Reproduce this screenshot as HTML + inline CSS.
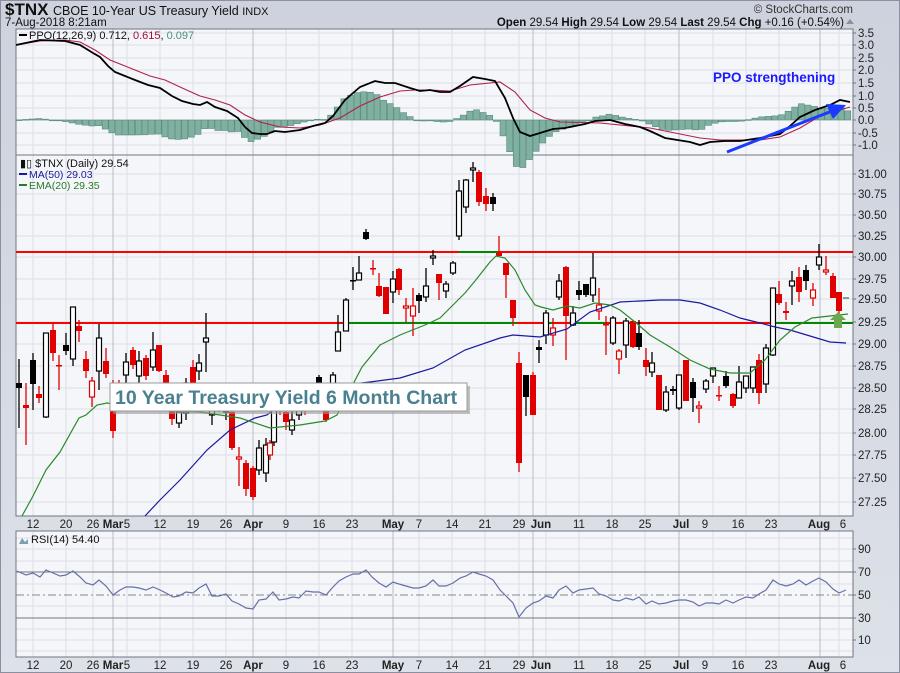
<!DOCTYPE html>
<html><head><meta charset="utf-8"><style>
html,body{margin:0;padding:0;background:#d6dae3;}
svg{display:block;font-family:"Liberation Sans",sans-serif;}
</style></head><body>
<svg id="s" width="900" height="673" viewBox="0 0 900 673" xmlns="http://www.w3.org/2000/svg">
<defs>
<linearGradient id="bg" x1="0" y1="0" x2="0" y2="1"><stop offset="0" stop-color="#cdd2dc"/><stop offset="1" stop-color="#dde1e8"/></linearGradient>
</defs>
<rect x="0" y="0" width="900" height="673" fill="url(#bg)"/>
<rect x="0.5" y="0.5" width="899" height="672" fill="none" stroke="#8a90a0"/>
<text x="5" y="15" font-size="17" font-weight="bold" fill="#111">$TNX</text>
<text x="53" y="15" font-size="12.5" fill="#111">CBOE 10-Year US Treasury Yield <tspan font-size="11">INDX</tspan></text>
<text x="5" y="26" font-size="11.5" fill="#111">7-Aug-2018 8:21am</text>
<text x="853" y="13" font-size="11.5" fill="#333" text-anchor="end">© StockCharts.com</text>
<text x="844" y="26" font-size="11.5" fill="#111" text-anchor="end"><tspan font-weight="bold">Open</tspan> 29.54  <tspan font-weight="bold">High</tspan> 29.54  <tspan font-weight="bold">Low</tspan> 29.54  <tspan font-weight="bold">Last</tspan> 29.54  <tspan font-weight="bold">Chg</tspan> +0.16 (+0.54%)</text>
<path d="M846 24 l4 -5 l4 5z" fill="#8a90a0"/>
<g id="panels"></g>
</svg>
<script>
const S=document.getElementById('panels');let h='';
const L=16,R=853;
const months=[113,253,393,533,679,820];
const weeks=[33,66,93,127,160,193,226,286,319,352,419,452,485,519,546,579,612,645,713,746,779,839];
function panel(y0,y1,hl){
 h+=`<rect x="${L}" y="${y0}" width="${R-L}" height="${y1-y0}" fill="#f5f6fa"/>`;
 hl.forEach(y=>h+=`<line x1="${L}" x2="${R}" y1="${y}" y2="${y}" stroke="#dcdfe6"/>`);
 weeks.forEach(x=>h+=`<line x1="${x}" x2="${x}" y1="${y0}" y2="${y1}" stroke="#dcdfe6"/>`);
 months.forEach(x=>h+=`<line x1="${x}" x2="${x}" y1="${y0}" y2="${y1}" stroke="#b8bcc6"/>`);
}
const ppoL=[[3.5,33],[3.0,45],[2.5,58],[2.0,70],[1.5,83],[1.0,96],[0.5,108],[0.0,120],[-0.5,133],[-1.0,145]];
panel(29,155,ppoL.map(a=>a[1]));
const pr=[[31.00,174],[30.75,194],[30.50,215],[30.25,236],[30.00,257],[29.75,279],[29.50,299],[29.25,322],[29.00,344],[28.75,366],[28.50,388],[28.25,409],[28.00,433],[27.75,455],[27.50,478],[27.25,502]];
panel(155,516,pr.map(a=>a[1]));
const rs=[[90,549],[70,572],[50,595],[30,618],[10,640]];
panel(531,657,[538,549,561,584,606,629,640,651]);
h+=`<line x1="${L}" x2="${R}" y1="572" y2="572" stroke="#777"/><line x1="${L}" x2="${R}" y1="618" y2="618" stroke="#777"/><line x1="${L}" x2="${R}" y1="595" y2="595" stroke="#888" stroke-dasharray="8,3,2,3"/>`;
[[29,155],[155,516],[531,657]].forEach(p=>h+=`<rect x="${L}" y="${p[0]}" width="${R-L}" height="${p[1]-p[0]}" fill="none" stroke="#707684"/>`);
function rl(arr,f){arr.forEach(a=>{h+=`<line x1="${R}" x2="${R+3}" y1="${a[1]}" y2="${a[1]}" stroke="#707684"/><text x="${R+5}" y="${a[1]+4}" font-size="11.5" fill="#222">${f(a[0])}</text>`;});}
rl(ppoL,v=>v.toFixed(1));rl(pr,v=>v.toFixed(2));rl(rs,v=>v);
const dl=[[33,'12'],[66,'20'],[93,'26'],[113,'Mar',1],[127,'5'],[160,'12'],[193,'19'],[226,'26'],[253,'Apr',1],[286,'9'],[319,'16'],[352,'23'],[393,'May',1],[419,'7'],[452,'14'],[485,'21'],[519,'29'],[541,'Jun',1],[579,'11'],[612,'18'],[645,'25'],[681,'Jul',1],[705,'9'],[738,'16'],[771,'23'],[819,'Aug',1],[843,'6']];
[528,669].forEach(y=>dl.forEach(d=>h+=`<text x="${d[0]}" y="${y}" font-size="11.5" text-anchor="middle" ${d[2]?'font-weight="bold"':''} fill="#222">${d[1]}</text>`));
h+=`<line x1="${L}" x2="${R}" y1="252" y2="252" stroke="#f00" stroke-width="2"/><line x1="459" x2="498" y1="252" y2="252" stroke="#080" stroke-width="2"/>`;
h+=`<line x1="${L}" x2="${R}" y1="323" y2="323" stroke="#f00" stroke-width="2"/>`;
[[345,517],[546,553],[575,606],[773,853]].forEach(s=>h+=`<line x1="${s[0]}" x2="${s[1]}" y1="323" y2="323" stroke="#080" stroke-width="2"/>`);
function pl(p,c,w){return `<polyline fill="none" stroke="${c}" stroke-width="${w}" points="${p.map(a=>a.join(',')).join(' ')}"/>`;}
const ema=[[22,516],[33,496],[46,470],[60,452],[79,418],[86,415],[97,405],[107,403],[150,410],[200,412],[240,418],[270,428],[300,425],[325,421],[337,415],[350,390],[362,367],[380,345],[400,335],[425,325],[440,318],[453,305],[465,293],[475,281],[490,262],[496,256],[505,258],[515,270],[525,290],[535,305],[541,307],[553,310],[567,306],[580,308],[595,303],[610,305],[620,310],[635,322],[650,335],[670,347],[690,360],[710,369],[730,373],[750,373],[765,360],[780,340],[795,327],[812,318],[830,316],[848,314]];
const ma=[[145,516],[160,500],[180,480],[207,450],[230,430],[255,418],[267,415],[285,400],[300,390],[370,382],[400,378],[433,368],[465,350],[500,338],[513,335],[540,337],[567,329],[590,312],[620,302],[660,300],[680,300],[700,303],[720,310],[740,318],[760,323],[775,327],[790,330],[810,336],[830,342],[846,343]];
const C=[[19,383,388,359,428,'b'],[26,405,408,383,445,'r'],[33,360,384,353,410,'b'],[39,394,398,386,403,'r'],[46,333,417,333,418,'h'],[53,330,353,322,361,'r'],[59,365,366,355,390,'r'],[66,345,351,333,355,'b'],[73,307,359,307,366,'h'],[79,326,331,320,342,'r'],[86,359,371,351,378,'r'],[92,381,397,377,407,'rh'],[99,338,371,324,390,'h'],[106,361,374,348,378,'r'],[113,383,431,380,438,'r'],[119,392,400,380,410,'r'],[126,362,375,353,385,'h'],[133,350,365,347,369,'r'],[139,361,376,351,388,'h'],[146,358,376,355,380,'r'],[153,350,367,332,371,'h'],[159,345,371,345,372,'r'],[166,375,383,370,395,'r'],[172,407,419,400,425,'r'],[179,412,423,405,428,'h'],[186,383,413,378,420,'h'],[193,367,384,360,390,'r'],[199,363,371,354,380,'h'],[206,338,342,313,372,'h'],[212,400,415,395,425,'h'],[219,395,405,390,412,'r'],[226,405,412,398,420,'h'],[232,412,448,405,450,'r'],[239,457,459,447,486,'rh'],[246,463,489,460,496,'r'],[253,468,497,466,500,'r'],[259,448,470,440,475,'h'],[266,445,473,438,482,'h'],[270,443,455,440,460,'rh'],[274,405,442,400,446,'h'],[280,398,408,390,415,'r'],[286,412,422,408,430,'r'],[292,420,430,410,435,'h'],[299,405,415,398,420,'h'],[305,398,408,390,415,'r'],[312,390,400,385,410,'h'],[319,377,383,375,390,'b'],[326,403,420,400,422,'r'],[333,375,395,372,400,'h'],[338,332,351,315,351,'h'],[346,300,331,298,331,'h'],[353,280,281,267,290,'b'],[359,273,280,256,280,'h'],[366,232,239,229,240,'b'],[373,268,269,260,275,'r'],[379,286,296,273,297,'r'],[386,287,314,287,314,'r'],[393,279,292,271,303,'h'],[399,269,290,268,295,'r'],[406,306,308,298,322,'rh'],[413,306,316,288,336,'rh'],[419,295,301,293,313,'b'],[426,286,297,268,302,'h'],[433,256,258,250,265,'h'],[439,274,283,274,300,'r'],[446,284,291,281,298,'h'],[453,263,273,261,275,'h'],[459,191,236,180,240,'h'],[466,180,207,179,213,'h'],[473,168,170,162,182,'h'],[479,172,202,170,206,'r'],[486,196,204,188,211,'r'],[493,197,204,193,211,'b'],[499,253,256,236,256,'r'],[506,263,275,263,298,'r'],[513,300,318,300,326,'r'],[519,363,463,352,472,'r'],[526,375,397,375,416,'b'],[533,375,415,372,415,'r'],[539,347,350,340,363,'b'],[546,313,335,310,344,'h'],[553,328,335,318,346,'rh'],[559,281,297,274,300,'h'],[566,267,316,266,360,'r'],[573,313,325,306,326,'h'],[579,290,295,281,300,'b'],[586,284,295,284,297,'b'],[593,278,295,253,302,'h'],[599,305,311,288,320,'rh'],[606,324,325,316,355,'r'],[613,318,343,316,345,'h'],[619,351,359,349,374,'rh'],[626,321,345,318,358,'h'],[633,321,347,320,348,'r'],[639,333,347,320,350,'b'],[646,360,367,348,376,'r'],[652,363,372,352,377,'h'],[659,375,410,375,410,'r'],[666,392,410,386,412,'h'],[673,389,391,386,395,'b'],[679,375,408,375,410,'h'],[686,360,401,360,401,'r'],[693,382,398,378,412,'b'],[699,406,408,401,423,'rh'],[706,381,389,379,393,'h'],[713,368,376,368,383,'h'],[719,395,396,386,401,'r'],[726,376,386,371,388,'b'],[733,394,406,393,408,'r'],[739,382,398,366,398,'h'],[746,376,388,376,393,'h'],[753,367,388,367,393,'h'],[759,360,393,354,404,'r'],[766,348,384,344,393,'h'],[773,288,355,288,356,'h'],[779,294,303,281,305,'r'],[786,311,313,302,320,'r'],[792,281,286,271,305,'h'],[799,277,292,267,302,'r'],[806,270,281,265,290,'b'],[813,290,298,283,306,'rh'],[819,257,265,244,270,'h'],[826,270,272,256,275,'rh'],[833,276,298,273,298,'r'],[839,292,311,292,320,'r']];
C.forEach(c=>{const [x,t,b,wt,wb,ty]=c;const col=ty[0]=='r'?'#e00000':'#000';
 h+=`<line x1="${x}" x2="${x}" y1="${wt}" y2="${wb}" stroke="${col}" stroke-width="1.3"/>`;
 const hh=Math.max(b-t,1.5);
 if(ty=='h'||ty=='rh')h+=`<rect x="${x-2.5}" y="${t}" width="5" height="${hh}" fill="#fff" stroke="${col}" stroke-width="1.2"/>`;
 else h+=`<rect x="${x-3}" y="${t}" width="6" height="${hh}" fill="${col}"/>`;});
h+=pl(ma,'#1a1aa0',1.2)+pl(ema,'#2a8a2a',1.2);
h+=`<line x1="843" x2="849" y1="298" y2="298" stroke="#5a8a5a" stroke-width="1.5"/>`;
h+=`<path d="M838 312 l8 8 h-4 v8 h-8 v-8 h-4z" fill="#6aa84f"/>`;
h+=`<text x="20" y="167" font-size="11" fill="#111">▮▯ $TNX (Daily) 29.54</text>`;
h+=`<line x1="19" x2="27" y1="174" y2="174" stroke="#1a1aa0" stroke-width="2"/><text x="29" y="178" font-size="10.5" fill="#1a1aa0">MA(50) 29.03</text>`;
h+=`<line x1="19" x2="27" y1="185" y2="185" stroke="#2a7a2a" stroke-width="2"/><text x="29" y="189" font-size="10.5" fill="#2a7a2a">EMA(20) 29.35</text>`;
h+=`<rect x="113" y="386" width="357" height="28" fill="#999" opacity=".6"/><rect x="110" y="383" width="357" height="28" fill="#fff" stroke="#999"/><text x="115" y="404" font-size="19.5" font-weight="bold" fill="#4a8090">10 Year Treasury Yield 6 Month Chart</text>`;
const blk=[[16,45],[40,40],[65,41],[80,45],[93,53],[100,57],[108,66],[115,72],[125,76],[135,80],[148,85],[160,88],[172,96],[182,101],[193,104],[200,105],[207,102],[215,107],[227,111],[238,118],[245,127],[252,133],[260,134],[267,134],[275,131],[285,132],[300,130],[313,126],[325,123],[333,116],[345,100],[360,87],[375,81],[385,83],[395,83],[410,88],[420,91],[430,90],[440,92],[450,92],[460,86],[473,77],[485,79],[495,81],[505,98],[513,118],[520,132],[530,136],[540,133],[553,129],[565,128],[585,124],[595,121],[610,120],[625,124],[640,127],[650,131],[665,138],[690,142],[700,145],[710,142],[725,141],[740,141],[760,138],[780,134],[790,126],[800,117],[815,110],[830,105],[840,100],[850,102]];
const red=[[16,45],[40,41],[65,40],[80,42],[95,50],[110,60],[130,68],[150,76],[165,80],[180,87],[200,96],[215,100],[230,105],[245,115],[260,122],[280,127],[300,128],[320,125],[340,118],[360,106],[380,97],[400,91],[415,90],[430,90],[450,91],[470,85],[500,82],[515,92],[530,110],[545,118],[560,122],[600,123],[650,128],[700,138],[720,140],[760,140],[780,137],[800,128],[820,116],[850,107]];
function ip(a,x){for(let i=1;i<a.length;i++)if(a[i][0]>=x){const p=a[i-1],q=a[i];return p[1]+(q[1]-p[1])*(x-p[0])/(q[0]-p[0]);}return a[a.length-1][1];}
for(let x=19;x<850;x+=6.63){const d=(ip(blk,x)-ip(red,x))*1.5;const y=Math.min(120,120+d),hh=Math.abs(d);
 h+=`<rect x="${x-3}" y="${y}" width="6" height="${Math.max(hh,0.8)}" fill="#7fb0a0" stroke="#5a8a80" stroke-width="0.6"/>`;}
h+=pl(red,'#b0204a',1.1)+pl(blk,'#000',1.8);
h+=`<line x1="19" x2="27" y1="35" y2="35" stroke="#000" stroke-width="2"/><text x="29" y="39" font-size="11" fill="#111">PPO(12,26,9) 0.712, <tspan fill="#a0103a">0.615</tspan>, <tspan fill="#4a9080">0.097</tspan></text>`;
h+=`<text x="713" y="82" font-size="13.5" font-weight="bold" fill="#1a1aff">PPO strengthening</text>`;
h+=`<line x1="727" y1="152" x2="832" y2="111" stroke="#1a3aff" stroke-width="3"/><path d="M846 105 L826 104 L833 119 Z" fill="#1a3aff"/>`;
const rsi=[[17,571],[26,575],[33,573],[40,577],[46,570],[53,573],[60,576],[66,575],[73,571],[80,577],[86,583],[93,585],[99,580],[106,586],[113,595],[120,590],[126,587],[133,587],[139,588],[146,590],[153,587],[160,590],[166,593],[173,597],[179,596],[186,592],[193,593],[199,588],[206,584],[212,596],[219,596],[226,594],[232,601],[239,604],[246,608],[253,609],[259,600],[266,599],[273,592],[279,600],[286,599],[293,597],[299,598],[306,591],[313,592],[319,592],[326,595],[333,587],[339,581],[346,577],[353,574],[359,574],[366,570],[372,577],[379,583],[386,587],[393,582],[399,584],[406,586],[413,588],[419,588],[426,586],[433,580],[439,586],[446,586],[453,583],[460,578],[466,576],[473,572],[479,574],[486,576],[493,580],[500,590],[506,596],[513,603],[519,617],[526,608],[533,603],[539,601],[546,596],[553,598],[559,590],[566,586],[573,593],[579,590],[586,589],[593,588],[599,594],[606,596],[613,600],[619,601],[626,598],[633,600],[639,597],[646,604],[652,601],[659,604],[666,603],[673,601],[679,600],[686,600],[693,602],[699,606],[706,603],[713,603],[719,604],[726,600],[733,603],[739,600],[746,597],[753,598],[759,594],[766,590],[773,580],[779,584],[786,586],[793,584],[799,580],[806,585],[813,581],[819,578],[826,582],[833,589],[839,593],[846,590]];
h+=pl(rsi,'#6670a8',1.2);
h+=`<path d="M19 544 l3 -6 l3 4 l3 -3 v5z" fill="#7aa0b0"/><text x="31" y="543" font-size="11" fill="#111">RSI(14) 54.40</text>`;
S.innerHTML=h;
</script>
</body></html>
